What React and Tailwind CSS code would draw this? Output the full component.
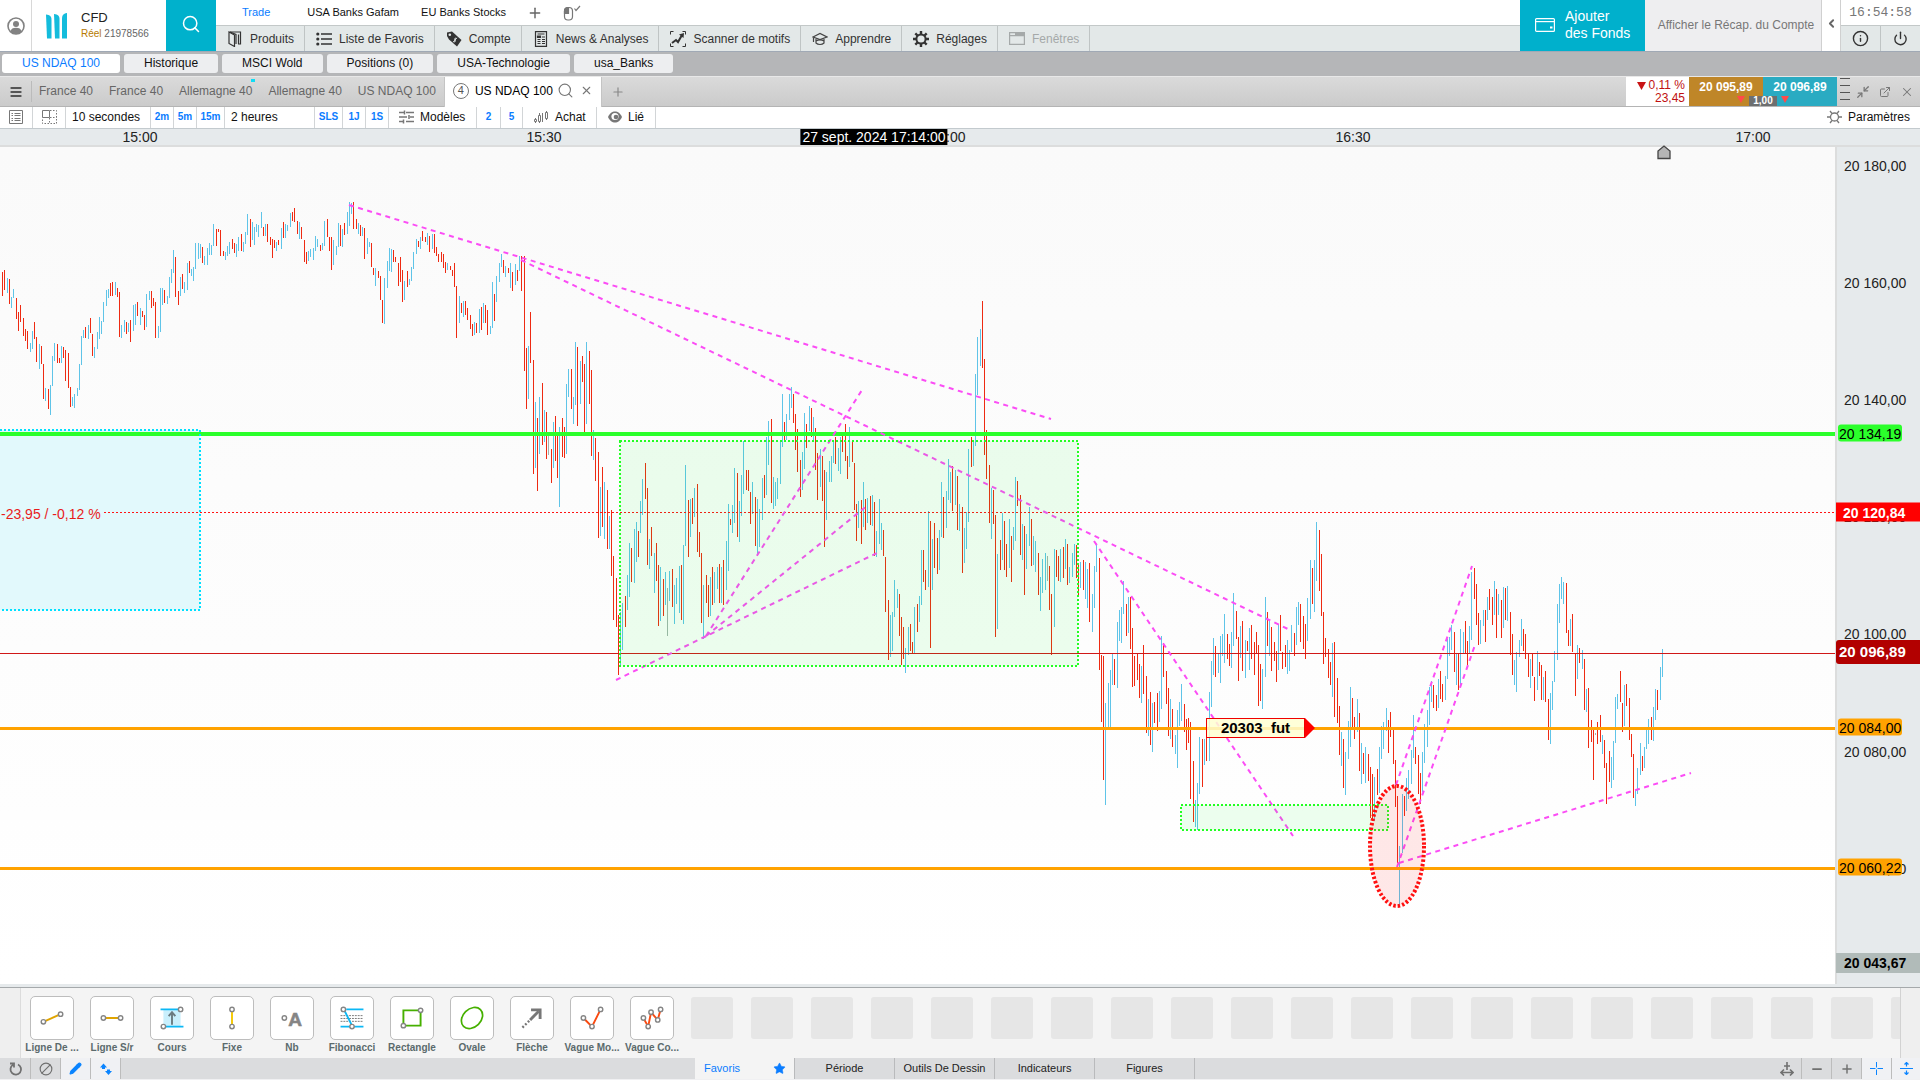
import {
  Search,
  Plus,
  Minus,
  X,
  Star,
  Info,
  Power,
  Ban,
  Pencil,
  ExternalLink,
  Minimize2,
  ChevronLeft,
  Menu,
} from "lucide-react";

const CHART_TOP = 147;
const CHART_W = 1835;
const CHART_H = 837;
const LAST_X = 1664;

const topPct = (y) => `${((y - CHART_TOP) / CHART_H) * 100}%`;

// [start x, bars], one bar = direction + high-low (r down, b up, g flat)
const SEGMENTS = [
  [2, "r272-296 r270-290 b278-293 r279-304 b297-308 b289-298 r298-319 r312-331 r305-322 r318-336 r329-341 r331-349 b343-352 b331-349 r322-339 r337-362 b344-369"],
  [41, "r346-364 r364-399 b388-401 r389-409 b385-415 b356-386 b343-361 r344-363 r358-363 b346-363 r347-358 r350-381 r353-388 r387-407 b397-406 b394-408 b388-396 b364-390"],
  [81, "b336-365 b330-338 r327-338 b325-339 r318-333 r334-356 b347-358 b332-349 b317-339 b321-334 b302-322 b290-306 b289-298 r283-296 r282-296 b282-295 r288-297"],
  [119, "r292-337 b325-338 b320-332 r322-334 b323-332 r320-342 b305-331 b304-325 r302-316 b308-325 r311-317 r315-330 b294-327 b291-300 r291-308 r298-306 r302-338 b326-338"],
  [160, "b288-332 b288-305 r290-303 b296-304 b277-298 b269-283 b250-273 r257-297 r291-305 b277-296 r274-289 b282-293 b263-290 r261-273 b269-276 b267-281 b243-269 b243-259 b244-258"],
  [202, "r247-263 b256-265 b248-265 b243-255 b245-255 b224-246 r229-246 r229-232 r230-256 r251-256 b252-260 b246-256 b242-254 r239-249 r243-253 b244-257 b237-251 r234-251"],
  [243, "b242-252 b232-244 b214-235 r219-247 b222-240 b227-245 b224-232 b225-237 b212-228 r227-236 b224-236 r224-242 r237-245 r239-258 r240-248 b242-251 r240-245 b228-249 r222-238"],
  [285, "b224-238 b225-231 b213-227 r212-221 r208-222 r221-234 b222-239 r227-239 r240-262 r252-264 b251-261 b249-257 b248-260 b236-251 b239-247 r245-251 b243-250 b221-246 r219-237"],
  [329, "r237-251 r237-270 b240-265 b246-255 b223-247 r225-246 b229-247 r223-235 b212-234 b202-226 b203-214 r202-229 r219-229 b223-234 r225-236 b227-236 r228-259 b238-254 b242-247"],
  [371, "r243-267 r268-275 b268-286 r271-278 r276-300 r300-323 b278-324 b261-288 b248-271 b249-272 r250-262 r257-262 r263-286 r257-282 r270-302 b281-300 r271-287 b279-285"],
  [411, "b267-281 b252-269 b239-254 r241-247 b237-249 r231-241 r237-242 b233-245 r236-252 b234-249 r234-253 r247-256 r254-262 r252-262 r254-268 r262-273 b263-270 r266-270"],
  [452, "r270-276 r263-287 r286-338 b296-323 r303-313 b301-317 r301-315 r308-320 r315-329 r324-336 b322-335 r323-333 b309-333 r307-330 b303-323 r305-323 r310-335 b326-334 b282-328"],
  [494, "r294-321 b276-302 b263-282 b254-267 r260-273 b266-277 r268-273 b263-288 r272-291 b264-285 r270-281 b256-271 r256-291 r256-371 r348-409 b346-399 r312-363 r360-474"],
  [535, "b402-468 r418-491 b397-454 r383-445 b410-442 r412-459 g432-455 r449-483 b422-468 r416-461 r435-478 b427-507 r418-457 r427-458 b384-454 b369-397 r369-409 b397-424"],
  [575, "b342-405 r347-426 b361-404 r356-382 r364-433 b342-424 r351-404 r370-456 b430-460 r438-481 r452-538 b487-536 r467-527 b482-539 r490-549 b516-549 r510-576 r556-620 r578-627"],
  [618, "r615-675 b612-667 b603-650 r596-627 b575-610 b543-597 r548-582 b529-583 b522-562 r531-557 b501-533 b479-515 r463-499 r488-565 b539-569 r527-556 b553-593 r543-581"],
  [658, "r565-626 b567-621 r579-616 b572-605 g588-636 b571-601 r569-607 b585-624 b578-604 b566-613 r565-620 b545-624 b465-546 r500-557 b499-537 r498-524 b488-517 r484-552"],
  [699, "r532-557 r553-623 b585-639 r575-603 r585-617 b577-616 r567-605 b572-603 b567-589 r564-603 b567-603 r560-605 b541-590 b504-571 r519-525 b505-533 b468-523 r473-537 b501-542"],
  [741, "b475-516 b441-494 r470-490 r470-491 r492-524 b482-514 r497-546 b499-555 b509-547 b478-520 r475-498 b437-495 b421-465 r419-503 b477-509 b482-506 b478-499 b441-484"],
  [782, "b394-447 r422-440 b414-440 b394-420 b387-408 r394-423 r414-450 r429-472 r460-497 b452-490 b413-469 r424-448 b406-431 r408-437 b417-441 r428-470 r453-500 b449-487 r456-501"],
  [824, "r470-547 b472-520 b461-482 b456-482 b441-463 r437-464 b448-471 b437-474 r436-452 r424-461 r456-479 b427-467 r440-462 r463-510 r504-541 b501-528 r500-544"],
  [863, "b482-527 r499-530 b498-523 r496-525 b495-526 r502-556 b531-557 b499-544 b523-550 r530-556 r557-612 r600-660 b615-657 b612-651 b580-617 b589-608 r594-636"],
  [901, "r617-665 r627-659 b648-673 b627-655 r624-651 r642-653 b607-653 r604-632 b596-622 b550-605 r550-582 r570-590 b511-587 r521-648 b539-590 r523-568 r538-574 b530-570"],
  [941, "b482-537 r497-538 b491-528 b459-500 b472-503 r466-511 b470-505 r476-530 b504-531 r507-573 b528-563 b512-549 b449-522 r437-467 b441-466 b374-446 b337-395 b329-366"],
  [982, "r301-368 r359-455 r430-479 r465-523 b488-539 r490-524 r515-637 b554-629 r540-570 b513-560 r521-570 r544-577 b519-568 r536-582 b527-550 b477-541 r481-506 r495-555 b524-560"],
  [1024, "r526-595 b534-569 b507-546 r519-566 b536-565 b541-572 r553-595 b577-611 b559-593 b553-590 g556-581 r566-610 r594-655 b549-627 r550-577 r556-581 b549-582 r547-578"],
  [1065, "b539-569 r544-585 b567-583 b553-577 b544-565 r545-578"],
  [1078, "r563-595 b562-588 r560-590 b562-599 b569-608 r563-622 b594-632 b566-608 b544-572 r558-670 r655-722 r656-780 b703-805 b683-728 b670-727 b654-685 r659-685 b622-688"],
  [1119, "b610-641 b607-643 b581-614 r604-636 b597-633 r597-649 r628-687 r656-686 r653-680 r664-698 b666-703 r645-694 r676-733 b699-736 r692-745 b703-752 r702-723 r693-731 b691-722"],
  [1161, "b636-709 r643-677 r671-704 r688-736 b699-739 r709-747 b735-754 b710-768 b702-726 b684-721 r704-732 r719-750 r718-743 r722-799 r761-822 b800-827 b783-830 b737-794 r739-787"],
  [1204, "b739-765 r730-761 b692-761 b661-707 b638-675 r646-677 b653-673 b636-683 b634-656 b614-663 r634-659 r644-666 b632-668 b593-646 r611-639 r637-681 b626-658 r621-671 b640-678"],
  [1247, "r641-651 b628-670 r625-659 r642-675 r632-654 r645-706 r664-701 b669-709 b597-677 r612-646 b621-656 r627-671 r642-661 r651-682 b624-670 r615-651 r652-669 r645-667 b640-674"],
  [1289, "b650-671 b625-652 r633-656 b607-645 b602-625 r604-642 r616-649 r624-659 b598-641 b560-619 r568-604 b560-612 b522-581 r530-591 r554-616 r612-664 r638-657 r649-678"],
  [1330, "r662-685 b643-697 r642-717 r678-723 r706-755 b732-766 r739-788 b752-795 b721-759 b687-747 r698-729 r717-739 b699-732 r713-771 b743-784 r753-774 b747-783 r754-781 r767-818"],
  [1372, "r774-821 b777-821 r769-795 b747-793 b726-759 b722-749 b708-731 r720-753 r712-737 r730-764 r760-807 r796-863 b846-906 b794-853 r796-816 b778-811 b770-799 b750-784"],
  [1413, "b715-758 r747-764 r755-794 r773-804 b752-792 b724-763 b710-747 b687-725 b681-702 r685-708 r695-711 b679-708 r671-699 r684-702 b676-700 b639-679 b637-656 b625-650 r632-672"],
  [1456, "b654-685 r653-690 b629-686 b632-654 r621-653 r641-665 b626-654 b572-640 r568-599 r584-625"],
  [1478, "r613-645 b620-644 b610-626 r610-642 b597-620 r589-610 r597-625 b581-615 r589-638 b594-615 r600-638 b587-628 r588-620 b586-621 r612-655 r634-675 b660-685 b652-692 b640-657"],
  [1521, "b619-646 r629-651 r634-659 r654-677 b659-688 r654-676 r677-701 b651-690 r662-676 r665-700 b677-700 r671-702 r699-740 b693-744 b681-710 b651-682 b604-660 b584-623"],
  [1561, "b577-599 b582-604 r583-633 r630-646 b619-646 r614-652 r654-696 b645-679 r648-663 b650-669 r659-710 b689-712 r688-748 r720-742 r730-780 g733-735 r722-744 r715-742"],
  [1602, "b735-754 r740-768 r763-804 r751-782 b757-788 b741-780 b697-743 b694-709 r671-702 r703-732 b685-726 r684-706 r698-740 r734-757 r754-798 b790-806 b768-794 b743-775 r756-771"],
  [1644, "b747-768 b730-749 b719-744 r717-740 b707-741 b689-720 r690-710 b667-700 b649-677"],
];

const BAR_COLORS = { r: "#ee2a12", b: "#5fc4e8", g: "#a3b3ad" };

const BARS = SEGMENTS.flatMap(([start, data], s) => {
  const end = s + 1 < SEGMENTS.length ? SEGMENTS[s + 1][0] : LAST_X;
  const bars = data.split(" ");
  return bars.map((bar, i) => {
    const [high, low] = bar.slice(1).split("-").map(Number);
    return { x: Math.round(start + ((end - start) * i) / bars.length), high, low, color: BAR_COLORS[bar[0]] };
  });
});

const TREND_LINES = [
  [349, 205, 1051, 419],
  [521, 260, 1290, 630],
  [706, 636, 862, 390],
  [706, 636, 868, 505],
  [616, 680, 877, 553],
  [1094, 541, 1293, 836],
  [1396, 785, 1472, 566],
  [1397, 867, 1475, 645],
  [1399, 863, 1691, 773],
];

const GRID_PRICES = [
  ["20 180,00", 166],
  ["20 160,00", 283],
  ["20 140,00", 400],
  ["20 120,00", 517],
  ["20 100,00", 634],
  ["20 080,00", 752],
  ["20 060,00", 869],
];

const PRICE_TAGS = [
  { text: "20 134,19", y: 433, className: "left-px rounded-[3px] px-px h-[17px] bg-[#2bff2b] text-black text-sm" },
  { text: "20 120,84", y: 512, className: "-left-px right-0 h-[19px] pl-[7px] bg-[#ff0000] text-white font-bold text-sm" },
  { text: "20 096,89", y: 652, className: "-left-px right-0 h-6 pl-[3px] bg-[#b20000] text-white font-bold text-[15px] rounded-l-[3px]" },
  { text: "20 084,00", y: 727, className: "left-px rounded-[3px] px-px h-[17px] bg-[#ffa200] text-black text-sm" },
  { text: "20 060,22", y: 867, className: "left-px rounded-[3px] px-px h-[17px] bg-[#ffa200] text-black text-sm" },
  { text: "20 043,67", y: 963, className: "-left-px right-0 h-5 pl-2 bg-[#b1bbb9] text-black font-bold text-sm" },
];

function UserIcon() {
  return (
    <svg width="18" height="18" viewBox="0 0 18 18">
      <circle cx="9" cy="9" r="8" fill="white" stroke="#828282" strokeWidth="1.600" />
      <circle cx="9" cy="7" r="3" fill="#828282" />
      <path d="M3.500 14.500c.5-2.700 2.500-3.700 5.500-3.700s5 1 5.500 3.700C13 16.300 11 17 9 17s-4-.7-5.500-2.500z" fill="#828282" />
    </svg>
  );
}

function BookIcon() {
  return (
    <svg width="16" height="16" viewBox="0 0 16 16" fill="none" stroke="#333" strokeWidth="1.200">
      <path d="M2 1h11.500v12H11M2 1v11.500l5.500 3V4z" />
      <path d="M3 1l6 2.500V13M11.500 3.500V13" />
    </svg>
  );
}

function ListIcon() {
  return (
    <svg width="16" height="16" viewBox="0 0 16 16" fill="#333">
      <circle cx="1.800" cy="3" r="1.600" />
      <circle cx="1.800" cy="8" r="1.600" />
      <circle cx="1.800" cy="13" r="1.600" />
      <path d="M5 2.300h11v1.400H5zM5 7.300h11v1.400H5zM5 12.300h11v1.400H5z" />
    </svg>
  );
}

function TagIcon() {
  return (
    <svg width="16" height="16" viewBox="0 0 16 16">
      <path d="M1 1.500L6 .5l9.500 8.500-4.500 6.500L3 8.500 1 5z" fill="#333" />
      <circle cx="3.800" cy="3.800" r="1.300" fill="#e3e8e8" />
      <path d="M10.500 7.500c-1.500-1-2.500.5-1.500 1.500s0 2.500-1.500 1.500M10.800 6.800l-3.600 4.500" fill="none" stroke="#e3e8e8" />
    </svg>
  );
}

function NewsIcon() {
  return (
    <svg width="16" height="16" viewBox="0 0 16 16" fill="none" stroke="#333" strokeWidth="1.200">
      <path d="M2.500 .6h11v14.800h-11z" />
      <path d="M4.500 3h7M4.500 8.500h3M9 8.500h3M4.500 10.500h3M9 10.500h3M4.500 12.500h3M9 12.500h3M9 6h3" />
      <path d="M4.500 5h3v1.500h-3z" fill="#333" />
    </svg>
  );
}

function ScanIcon() {
  return (
    <svg width="16" height="16" viewBox="0 0 16 16" fill="none" stroke="#333">
      <path d="M.5 3.500v-3h3M12.500 .5h3v3M15.500 12.500v3h-3M3.500 15.500h-3v-3" strokeWidth="1" />
      <path d="M2 12l4-3 2 2 4-7" strokeWidth="2" />
      <path d="M9 3.500l5-1.500-.5 5z" fill="#333" stroke="none" />
    </svg>
  );
}

function LearnIcon() {
  return (
    <svg width="16" height="14" viewBox="0 0 16 14" fill="none" stroke="#444" strokeWidth="1.200">
      <path d="M1 5l7-3.500L15 5l-7 2.500z" />
      <path d="M4 7v4c2 2 6 2 8 0V7M4 9c2.500-1.500 5.500-1.500 8 0M1.500 5.500V10" />
    </svg>
  );
}

function GearIcon() {
  return (
    <svg width="16" height="16" viewBox="0 0 16 16" fill="none" stroke="#333">
      <circle cx="8" cy="8" r="4.600" strokeWidth="2" />
      <path d="M8 0v3M8 13v3M0 8h3M13 8h3M2.300 2.300l2.200 2.200M11.500 11.500l2.200 2.200M13.700 2.300l-2.200 2.200M4.500 11.500l-2.200 2.200" strokeWidth="2.400" />
    </svg>
  );
}

function WindowIcon() {
  return (
    <svg width="16" height="13" viewBox="0 0 16 13" fill="none" stroke="#a5a9a9" strokeWidth="1.200">
      <path d="M.6 .6h14.800v11.800H.6zM.6 3.600h14.800" />
      <path d="M6 1h9v2.500H6z" fill="#a5a9a9" stroke="none" />
    </svg>
  );
}

function BrandLogo() {
  return (
    <svg width="22" height="26" viewBox="0 0 22 26" fill="#14bcdc">
      <path d="M0 1.500c4 .5 5.500 2 5.500 5V25.500H1z" />
      <path d="M8 1c4 .5 5.500 2 5.500 5v19.500H9z" />
      <path d="M21 0c-4 .5-5 2.500-5 6v19.500h5z" />
    </svg>
  );
}

function MouseIcon() {
  return (
    <svg width="18" height="18" viewBox="0 0 18 18" fill="none" stroke="#777" strokeWidth="1.200">
      <rect x="1.500" y="3.500" width="8" height="12.500" rx="3.500" />
      <path d="M5.500 3.500v6h-4V7c0-2 1.500-3.500 4-3.500z" fill="#777" />
      <path d="M11.500 4.500l1.500 2L17 2" />
    </svg>
  );
}

const HEADER_MENU = [
  { label: "Produits", icon: <BookIcon /> },
  { label: "Liste de Favoris", icon: <ListIcon /> },
  { label: "Compte", icon: <TagIcon /> },
  { label: "News & Analyses", icon: <NewsIcon /> },
  { label: "Scanner de motifs", icon: <ScanIcon /> },
  { label: "Apprendre", icon: <LearnIcon /> },
  { label: "Réglages", icon: <GearIcon /> },
  { label: "Fenêtres", icon: <WindowIcon />, disabled: true },
];

function Header() {
  return (
    <header className="flex h-[52px] shrink-0 border-b border-[#a0a9b5] bg-white">
      <button type="button" aria-label="Profil" className="flex w-8 items-center justify-center border-r border-[#d8d8d8]">
        <UserIcon />
      </button>
      <div className="flex w-[134px] items-center gap-[13px] pl-3.5">
        <BrandLogo />
        <div className="flex flex-col gap-px">
          <span className="text-[13px] leading-4 text-[#222]">CFD</span>
          <span className="text-[10px] leading-[14px] whitespace-nowrap text-[#666]">
            <span className="text-[#b67a00]">Réel</span> 21978566
          </span>
        </div>
      </div>
      <button type="button" aria-label="Rechercher" className="flex w-[50px] items-center justify-center bg-[#00b1cc]">
        <Search size={20} strokeWidth={1.8} className="-mt-1 text-white" />
      </button>

      <div className="flex min-w-0 flex-1 flex-col">
        <nav className="flex h-[26px] items-center border-b border-[#c3c8c8] text-[11px] text-[#111]">
          <button type="button" className="px-[26px] text-[#0a7cff]">Trade</button>
          <button type="button" className="px-[11px]">USA Banks Gafam</button>
          <button type="button" className="px-[11px]">EU Banks Stocks</button>
          <button type="button" aria-label="Ajouter un espace" className="ml-2.5">
            <Plus size={16} strokeWidth={2.2} className="text-[#666]" />
          </button>
          <button type="button" aria-label="Souris" className="ml-5">
            <MouseIcon />
          </button>
        </nav>
        <nav className="flex flex-1 bg-[#e3e8e8] text-xs">
          {HEADER_MENU.map((item) => (
            <button
              key={item.label}
              type="button"
              disabled={item.disabled}
              className={`flex items-center gap-[7px] border-r border-[#bfc4c4] pr-2.5 pl-[11px] whitespace-nowrap ${item.disabled ? "text-[#a5a9a9]" : "text-[#333]"}`}
            >
              <span className="flex w-4 justify-center">{item.icon}</span>
              {item.label}
            </button>
          ))}
        </nav>
      </div>

      <button type="button" className="flex w-[125px] items-center gap-2.5 bg-[#00b0cc] pb-0.5 pl-[15px] text-left text-sm leading-[17px] text-white">
        <svg width="20" height="14" viewBox="0 0 20 14" fill="none" stroke="white" strokeWidth="1.200">
          <rect x=".6" y=".6" width="18.800" height="12.800" rx="1" />
          <path d="M1 3.600h18" />
          <rect x="15" y="8.500" width="2.500" height="2" fill="white" stroke="none" />
        </svg>
        <span>Ajouter<br />des Fonds</span>
      </button>
      <button type="button" className="w-44 bg-[#eeeef0] pb-0.5 pl-1.5 text-center text-xs whitespace-nowrap text-[#777]">
        Afficher le Récap. du Compte
      </button>
      <button type="button" aria-label="Réduire" className="flex w-5 items-center justify-center border-x border-[#d0d0d0]">
        <ChevronLeft size={13} strokeWidth={3.5} className="-mt-1 text-[#666]" />
      </button>
      <div className="flex w-[79px] flex-col">
        <time className="h-[26px] border-b border-[#c3c8c8] text-center font-['Liberation_Mono',monospace] text-[13px] leading-[26px] text-[#777]">16:54:58</time>
        <div className="flex flex-1 bg-[#e3e8e8] text-[#333]">
          <button type="button" aria-label="Informations" className="flex flex-1 items-center justify-center border-r border-[#bfc4c4]">
            <Info size={17} strokeWidth={2} />
          </button>
          <button type="button" aria-label="Déconnexion" className="flex flex-1 items-center justify-center">
            <Power size={15} strokeWidth={2.2} />
          </button>
        </div>
      </div>
    </header>
  );
}

const WORKSPACES = ["US NDAQ 100", "Historique", "MSCI Wold", "Positions (0)", "USA-Technologie", "usa_Banks"];

function WorkspaceTabs() {
  return (
    <nav className="flex h-6 shrink-0 gap-1 bg-[#b5b6b8] pt-0.5 pl-0.5 text-xs">
      {WORKSPACES.map((name, i) => (
        <button
          key={name}
          type="button"
          className={`h-[19px] rounded-[3px] px-5 leading-[17px] whitespace-nowrap ${i === 0 ? "bg-white text-[#0a7cff]" : "bg-[#edeef0] text-[#111]"}`}
        >
          {name}
        </button>
      ))}
    </nav>
  );
}

function QuoteBox() {
  return (
    <div className="flex text-xs">
      <div className="flex w-[63px] flex-col items-end bg-white pt-0.5 pr-1 leading-[13px] text-[#c01010]">
        <span className="flex items-center gap-[3px] whitespace-nowrap">
          <svg width="9" height="8" viewBox="0 0 9 8"><path d="M0 0h9L4.500 8z" fill="#c81414" /></svg>
          0,11 %
        </span>
        <span>23,45</span>
      </div>
      <div className="relative flex font-bold text-white">
        <button type="button" className="w-[74px] bg-[#bf8628] pb-2.5 text-center">20 095,89</button>
        <button type="button" className="w-[74px] bg-[#2aabc2] pb-2.5 text-center">20 096,89</button>
        <div className="absolute inset-x-0 bottom-0 flex items-end justify-center gap-1">
          <svg width="8" height="7" viewBox="0 0 8 7" className="mb-[3px]"><path d="M0 0h8L4 7z" fill="#ff4a4a" /></svg>
          <span className="h-2.5 bg-[#6d6f70] px-1 text-[10px] leading-[10px]">1,00</span>
          <svg width="8" height="7" viewBox="0 0 8 7" className="mb-[3px]"><path d="M0 0h8L4 7z" fill="#ff4a4a" /></svg>
        </div>
      </div>
    </div>
  );
}

function ChartTabs() {
  return (
    <div className="flex h-[31px] shrink-0 border-t border-b border-t-[#e8e8e8] border-b-[#b4b4b4] bg-gradient-to-b from-[#dadada] to-[#cbcbcb] text-xs text-[#666]">
      <button type="button" aria-label="Menu" className="my-1 flex w-8 items-center justify-center border-r border-[#bbb]">
        <Menu size={14} strokeWidth={3.5} className="text-[#555]" />
      </button>
      <nav className="flex items-center gap-4 pr-2 pb-0.5 pl-[7px] whitespace-nowrap">
        <button type="button">France 40</button>
        <button type="button">France 40</button>
        <button type="button" className="relative">
          Allemagne 40
          <span className="absolute -top-1 -right-[3px] h-[3px] w-1 bg-[#10dcf5]" />
        </button>
        <button type="button">Allemagne 40</button>
        <button type="button">US NDAQ 100</button>
      </nav>
      <div className="-mb-px flex items-center border-x border-[#c4c4c4] bg-white pr-2 pb-[3px] pl-2 text-black">
        <span className="flex h-4 w-4 items-center justify-center rounded-full border border-[#777] text-[11px] text-[#555]">4</span>
        <button type="button" className="pl-1.5 whitespace-nowrap">US NDAQ 100</button>
        <button type="button" aria-label="Chercher" className="pl-1"><Search size={17} strokeWidth={1.6} className="text-[#777]" /></button>
        <button type="button" aria-label="Fermer l'onglet" className="pl-1.5"><X size={13} strokeWidth={2} className="text-[#777]" /></button>
      </div>
      <button type="button" aria-label="Nouvel onglet" className="w-8">
        <Plus size={14} strokeWidth={2} className="mx-auto text-[#888]" />
      </button>
      <div className="ml-auto flex">
        <QuoteBox />
        <svg width="10" height="29" viewBox="0 0 10 29" className="ml-[3px]">
          <path d="M0 1.500h10M0 8.500h10M0 15.500h10M0 22.500h10" stroke="#555" />
        </svg>
        <div className="ml-1.5 flex items-center gap-2 pr-1.5 text-[#777]">
          <button type="button" aria-label="Réduire la fenêtre"><Minimize2 size={14} strokeWidth={2.2} /></button>
          <button type="button" aria-label="Détacher"><ExternalLink size={12} strokeWidth={2} className="mx-px" /></button>
          <button type="button" aria-label="Fermer"><X size={14} strokeWidth={1.8} /></button>
        </div>
      </div>
    </div>
  );
}

function ToolCell({ children, className = "", label }) {
  return (
    <button type="button" aria-label={label} className={`flex h-full items-center border-r border-[#d2d5d7] pb-0.5 whitespace-nowrap ${className}`}>
      {children}
    </button>
  );
}

function ChartToolbar() {
  const small = "justify-center text-[10px] font-bold text-[#0a7cff]";
  return (
    <div className="flex h-[22px] shrink-0 items-center border-b border-[#c3cace] bg-white text-xs text-[#111]">
      <ToolCell label="Liste" className="w-[33px] justify-center">
        <svg width="14" height="14" viewBox="0 0 14 14" fill="none" stroke="#777">
          <path d="M.5 .5h13v13H.5zM5.500 3.500h6M5.500 5.500h6M5.500 8.500h6M5.500 10.500h6M2.500 3.500h1.500M2.500 5.500h1.500M2.500 8.500h1.500M2.500 10.500h1.500" />
        </svg>
      </ToolCell>
      <ToolCell label="Disposition" className="w-[33px] justify-center">
        <svg width="15" height="14" viewBox="0 0 15 14" fill="none" stroke="#777">
          <path d="M.5 .5h7v7h-7z" />
          <path d="M8 .5h6.500v13H.5V8M7.500 8v5.500M8 7.500h6.500" strokeDasharray="1.500 1.500" />
        </svg>
      </ToolCell>
      <ToolCell className="w-[85px] pl-1.5">10 secondes</ToolCell>
      <ToolCell className={`w-[23px] ${small}`}>2m</ToolCell>
      <ToolCell className={`w-[23px] ${small}`}>5m</ToolCell>
      <ToolCell className={`w-7 ${small}`}>15m</ToolCell>
      <ToolCell className="w-[90px] pl-1.5">2 heures</ToolCell>
      <ToolCell className={`w-7 ${small}`}>SLS</ToolCell>
      <ToolCell className={`w-[23px] ${small}`}>1J</ToolCell>
      <ToolCell className={`w-[23px] ${small}`}>1S</ToolCell>
      <ToolCell className="w-[88px] gap-1.5 pl-2.5">
        <svg width="15" height="14" viewBox="0 0 15 14" fill="none" stroke="#777" strokeWidth="1.500">
          <path d="M0 2.500h5M7 2.500h8M0 7h8M11 7h4M0 11.500h4M7 11.500h8M5.500 .5v4M10 5v4M4.500 9.500v4" />
        </svg>
        Modèles
      </ToolCell>
      <ToolCell className={`w-6 ${small}`}>2</ToolCell>
      <ToolCell className={`w-[22px] ${small}`}>5</ToolCell>
      <ToolCell className="w-[74px] gap-1.5 pl-[11px]">
        <svg width="15" height="14" viewBox="0 0 15 14" fill="none" stroke="#777">
          <path d="M1.500 8v5M5.500 3v10M8.500 3v9M12.500 1v9" />
          <path d="M.5 9.500h2v2h-2zM4.500 5.500h2v6h-2zM11.500 2.500h2v6h-2z" fill="white" />
        </svg>
        Achat
      </ToolCell>
      <ToolCell className="w-[59px] gap-1.5 pl-[11px]">
        <svg width="14" height="12" viewBox="0 0 14 12">
          <path d="M0 6c2-4 4-5.500 7-5.500S12 2 14 6c-2 4-4 5.500-7 5.500S2 10 0 6z" fill="#777" />
          <circle cx="7" cy="5.500" r="3.600" fill="white" />
          <circle cx="8" cy="6" r="2.300" fill="#777" />
        </svg>
        Lié
      </ToolCell>
      <button type="button" className="ml-auto flex items-center gap-1.5 pr-2.5 pb-0.5">
        <svg width="15" height="14" viewBox="0 0 15 14" fill="none" stroke="#777" strokeWidth="1.300">
          <circle cx="7.500" cy="7" r="4" />
          <path d="M0 7h3M12 7h3M3 1l2 2.500M12 1l-2 2.500M3 13l2-2.500M12 13l-2-2.500" />
        </svg>
        Paramètres
      </button>
    </div>
  );
}

const TIMES = [
  ["15:00", 140],
  ["15:30", 544],
  ["16:00", 948],
  ["16:30", 1353],
  ["17:00", 1753],
];

function TimeAxis() {
  return (
    <div className="relative h-[18px] shrink-0 border-b-2 border-[#dcdddd] bg-[#e6eaec] text-sm leading-4 text-[#222]">
      {TIMES.map(([label, x]) => (
        <span key={label} className="absolute top-0 -translate-x-1/2" style={{ left: `${(x / 1920) * 100}%` }}>
          {label}
        </span>
      ))}
      <span className="absolute top-0 h-4 -translate-x-1/2 bg-black px-0.5 leading-4 whitespace-nowrap text-white" style={{ left: `${(874 / 1920) * 100}%` }}>
        27 sept. 2024 17:14:00
      </span>
      <svg width="14" height="15" viewBox="0 0 14 15" className="absolute top-4 z-10 -translate-x-1/2" style={{ left: `${(1664 / 1920) * 100}%` }}>
        <path d="M1 13.500V6l6-5 6 5v7.500z" fill="#b5b5b5" stroke="#444" strokeWidth="1.300" />
      </svg>
    </div>
  );
}

function Chart() {
  return (
    <div className="flex min-h-0 flex-1">
      <div className="relative min-w-0 flex-1 overflow-hidden bg-gradient-to-b from-[#fafafa] to-white">
        <svg className="absolute inset-0 h-full w-full" viewBox={`0 ${CHART_TOP} ${CHART_W} ${CHART_H}`} preserveAspectRatio="none">
          <g shapeRendering="crispEdges">
            <rect x="0" y="430" width="200" height="180" fill="#e2f9fc" />
            {BARS.map((bar, i) => (
              <rect key={i} x={bar.x} y={bar.high} width="1" height={bar.low - bar.high} fill={bar.color} />
            ))}
            <rect x="0" y="432" width="1835" height="4" fill="#2bff2b" />
            <path d="M104 512.500H1835" stroke="#ff1414" strokeWidth="1" strokeDasharray="2 2" />
            <rect x="0" y="653" width="1835" height="1" fill="#d01818" />
            <rect x="0" y="727" width="1835" height="3" fill="#ffa200" />
            <rect x="0" y="867" width="1835" height="3" fill="#ffa200" />
          </g>
          {TREND_LINES.map(([x1, y1, x2, y2]) => (
            <line key={`${x1}-${x2}`} x1={x1} y1={y1} x2={x2} y2={y2} stroke="#fb4df5" strokeWidth="2" strokeDasharray="5 4.500" />
          ))}
          <g strokeWidth="2" strokeDasharray="2 2" shapeRendering="crispEdges">
            <path d="M0 430H200V610H0" fill="none" stroke="#00e0ff" />
            <rect x="620" y="441" width="458" height="225" fill="#00ff20" fillOpacity=".07" stroke="#22ff22" />
            <rect x="1181" y="805" width="207" height="25" fill="#00ff20" fillOpacity=".07" stroke="#22ff22" />
          </g>
          <ellipse cx="1397" cy="846" rx="27" ry="60" fill="#ff2020" fillOpacity=".1" stroke="#ff1010" strokeWidth="4" strokeDasharray="2.500 2" />
        </svg>
        <span className="absolute left-px -translate-y-1/2 text-sm leading-4 whitespace-nowrap text-[#e81c1c]" style={{ top: topPct(514) }}>
          -23,95 / -0,12 %
        </span>
        <div
          className="absolute flex -translate-y-1/2 items-center"
          style={{ top: topPct(728), left: `${(1206 / CHART_W) * 100}%` }}
        >
          <span className="h-5 w-[99px] border border-[#f00000] bg-[#ffffd2]/85 text-center text-[15px] leading-[18px] font-bold whitespace-pre text-black">20303  fut</span>
          <svg width="10" height="20" viewBox="0 0 10 20"><path d="M0 0l10 10L0 20z" fill="#ff0000" /></svg>
        </div>
      </div>
      <div className="relative w-[85px] border-l-2 border-[#dcdddd] bg-[#e6eaec] text-sm text-[#222]">
        {GRID_PRICES.map(([label, y]) => (
          <span key={label} className="absolute left-[7px] -translate-y-1/2 leading-4 whitespace-nowrap" style={{ top: topPct(y) }}>
            {label}
          </span>
        ))}
        {PRICE_TAGS.map((tag) => (
          <span key={tag.text} className={`absolute flex -translate-y-1/2 items-center whitespace-nowrap ${tag.className}`} style={{ top: topPct(tag.y) }}>
            {tag.text}
          </span>
        ))}
      </div>
    </div>
  );
}

function Dots({ points }) {
  return points.map(([cx, cy]) => (
    <circle key={`${cx}-${cy}`} cx={cx} cy={cy} r="2.300" fill="white" stroke="#858585" strokeWidth="1.500" />
  ));
}

const TOOLS = [
  {
    label: "Ligne De ...",
    art: <><path d="M13 26L31 18" stroke="#e0a400" strokeWidth="2" /><Dots points={[[13, 26], [31, 18]]} /></>,
  },
  {
    label: "Ligne S/r",
    art: <><path d="M13 22h18" stroke="#e0a400" strokeWidth="2" /><Dots points={[[13, 22], [31, 22]]} /></>,
  },
  {
    label: "Cours",
    art: (
      <>
        <path d="M13 13h18v18H13z" fill="#c9effc" />
        <path d="M10 13h20M14 31h20" stroke="#0cb8f5" strokeWidth="2" />
        <path d="M22 29V16M18.500 20L22 16l3.500 4" stroke="#6b7b80" strokeWidth="2" />
        <Dots points={[[31, 13], [13, 31]]} />
      </>
    ),
  },
  {
    label: "Fixe",
    art: <><path d="M22 13v18" stroke="#f5c800" strokeWidth="2" /><Dots points={[[22, 13], [22, 31]]} /></>,
  },
  {
    label: "Nb",
    art: (
      <>
        <Dots points={[[14, 22]]} />
        <text x="18" y="30" fontSize="20" fill="#858585" stroke="#858585" strokeWidth=".6">A</text>
      </>
    ),
  },
  {
    label: "Fibonacci",
    art: (
      <>
        <path d="M10 19.500h24M10 22.500h24M10 25.500h24" stroke="#777" strokeDasharray="2 1" />
        <path d="M16 13h18M10 31h24M14 14l8 16" stroke="#0cb8f5" strokeWidth="2" />
        <Dots points={[[13, 13], [22, 31]]} />
      </>
    ),
  },
  {
    label: "Rectangle",
    art: <><path d="M13 14h18v16H13z" stroke="#46b000" strokeWidth="2" /><Dots points={[[31, 14], [13, 30]]} /></>,
  },
  {
    label: "Ovale",
    art: <ellipse cx="22" cy="22" rx="12.500" ry="9.500" transform="rotate(-45 22 22)" stroke="#46b000" strokeWidth="1.800" />,
  },
  {
    label: "Flèche",
    art: (
      <>
        <path d="M12 32l8-8" stroke="#777" strokeWidth="2.500" strokeDasharray="2 2" />
        <path d="M20 24l9-9" stroke="#777" strokeWidth="3" />
        <path d="M21 13.500h9.500V23" stroke="#777" strokeWidth="3" />
      </>
    ),
  },
  {
    label: "Vague Mo...",
    art: <><path d="M13 22l9 9 9-18" stroke="#fa4a10" strokeWidth="2" /><Dots points={[[13, 22], [22, 31], [31, 13]]} /></>,
  },
  {
    label: "Vague Co...",
    art: (
      <>
        <path d="M13 22l5 9 3-15 7 8 3-11" stroke="#fa4a10" strokeWidth="2" />
        <Dots points={[[13, 22], [18, 31], [21, 16], [28, 24], [31, 13]]} />
      </>
    ),
  },
];

function DrawingTools() {
  return (
    <div className="flex h-[74px] shrink-0 border-t-3 border-[#e6eaec] bg-[#f4f4f4]">
      <div className="flex min-w-0 flex-1 border-t border-[#a5a9ab]">
        <div className="w-[21px] shrink-0 border-r border-[#dcdcdc] bg-[#efefef]" />
        <div className="flex min-w-0 flex-1 overflow-hidden pt-2 pl-px">
          {TOOLS.map((tool) => (
            <button key={tool.label} type="button" className="flex w-15 shrink-0 flex-col items-center gap-px text-[10px] leading-[14px] font-bold text-[#5b6a6c]">
              <svg width="44" height="44" viewBox="0 0 44 44" fill="none" className="shrink-0 rounded-[5px] border border-[#bdbdbd] bg-white">
                {tool.art}
              </svg>
              <span className="whitespace-nowrap">{tool.label}</span>
            </button>
          ))}
          {Array.from({ length: 21 }, (_, i) => (
            <div key={i} className="w-15 shrink-0 px-[9px] pt-px">
              <div className="h-[42px] rounded-[3px] bg-[#e6e6e6]" />
            </div>
          ))}
        </div>
        <div className="w-5 shrink-0 border-l border-[#d2d2d2] bg-[#efefef]" />
      </div>
    </div>
  );
}

function StatusButton({ label, active, children }) {
  return (
    <button
      type="button"
      aria-label={label}
      className={`flex w-[30px] shrink-0 items-center justify-center border-r border-[#bcbcbc] ${active ? "bg-[#f0f1f4] text-[#0a84ff]" : "text-[#707070]"}`}
    >
      {children}
    </button>
  );
}

function StatusBar() {
  const tab = "w-[100px] border-r border-[#b9babc] text-center whitespace-nowrap";
  return (
    <footer className="flex h-[22px] shrink-0 border-b border-[#f0f0f2] bg-[#dbdcde] text-[11px] text-[#222]">
      <div className="flex w-[36.2%] pl-px">
        <StatusButton label="Réinitialiser">
          <svg width="14" height="14" viewBox="0 0 14 14" fill="none" stroke="currentColor" strokeWidth="1.800"><path d="M9 2.500a5.300 5.300 0 1 1-5 .3M1 1.500h4v4" /></svg>
        </StatusButton>
        <StatusButton label="Masquer"><Ban size={14} strokeWidth={2} className="rotate-90" /></StatusButton>
        <StatusButton label="Dessiner" active><Pencil size={13} fill="currentColor" /></StatusButton>
        <StatusButton label="Ajuster" active>
          <svg width="12" height="12" viewBox="0 0 12 12" fill="currentColor"><path d="M0 4.500L3.500 .5 7 4.500zM5 8h7l-3.500 4zM2 4.500h3V6H2zM7 6.500h3V8H7z" /></svg>
        </StatusButton>
      </div>
      <nav className="flex">
        <button type="button" className="flex w-[100px] items-center justify-between border-r border-[#b9babc] bg-[#f4f4f4] pr-2 pl-[9px] text-[#0a7cff]">
          Favoris
          <Star size={13} fill="currentColor" strokeWidth={1} />
        </button>
        <button type="button" className={tab}>Période</button>
        <button type="button" className={tab}>Outils De Dessin</button>
        <button type="button" className={tab}>Indicateurs</button>
        <button type="button" className={tab}>Figures</button>
      </nav>
      <div className="-mr-0.5 flex flex-1 justify-end">
        <StatusButton label="Étirer">
          <svg width="14" height="14" viewBox="0 0 14 14" fill="none" stroke="currentColor" strokeWidth="1.600"><path d="M7 0v8M4 4h6M1 10.500h12M4 7.500l-3 3 3 3M10 7.500l3 3-3 3" /></svg>
        </StatusButton>
        <StatusButton label="Dézoomer"><Minus size={14} strokeWidth={3} /></StatusButton>
        <StatusButton label="Zoomer"><Plus size={14} strokeWidth={2.5} /></StatusButton>
        <StatusButton label="Réticule" active>
          <svg width="13" height="13" viewBox="0 0 13 13" stroke="currentColor"><path d="M6.500 0v5.500M6.500 7.500V13M0 6.500h5.500M7.500 6.500H13" /></svg>
        </StatusButton>
        <StatusButton label="Centrer" active>
          <svg width="13" height="13" viewBox="0 0 13 13" fill="none" stroke="currentColor" strokeWidth="1.200"><path d="M0 6.500h13M6.500 1v3.500M6.500 8.500V12M4.500 2.500l2-2 2 2M4.500 10.500l2 2 2-2" /></svg>
        </StatusButton>
      </div>
    </footer>
  );
}

export default function App() {
  return (
    <div className="flex h-screen flex-col overflow-hidden bg-white font-['Liberation_Sans',Arial,sans-serif]">
      <Header />
      <WorkspaceTabs />
      <ChartTabs />
      <ChartToolbar />
      <TimeAxis />
      <Chart />
      <DrawingTools />
      <StatusBar />
    </div>
  );
}
